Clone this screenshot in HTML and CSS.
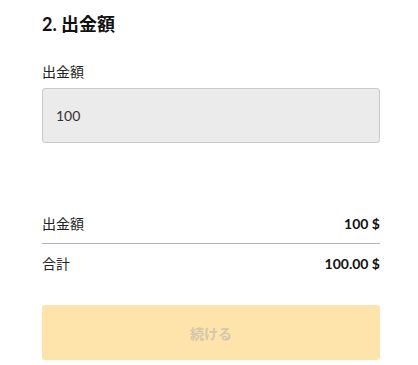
FILE: index.html
```html
<!DOCTYPE html>
<html lang="ja">
<head>
<meta charset="utf-8">
<link rel="stylesheet" href="styles.css">
</head>
<body>
<div class="page">
  <h2 class="title">2. 出金額</h2>
  <div class="field">
    <label class="label">出金額</label>
    <div class="input">100</div>
  </div>
  <div class="summary">
    <div class="row row-first"><span>出金額</span><span class="val">100 $</span></div>
    <div class="row"><span>合計</span><span class="val">100.00 $</span></div>
  </div>
  <button class="btn">続ける</button>
</div>
</body>
</html>
```
FILE: styles.css
```css
html, body { margin: 0; padding: 0; background: #fff; }
body {
  font-family: Lato, "Noto Sans CJK JP", sans-serif;
  color: #222;
}
.page {
  width: 338px;
  padding: 14px 0 0 42px;
  display: flex;
  flex-direction: column;
}
.title {
  margin: 0;
  font-size: 18px;
  line-height: 20px;
  font-weight: 700;
  color: #111;
}
.field {
  margin-top: 28px;
  display: flex;
  flex-direction: column;
}
.label {
  font-size: 14px;
  line-height: 20px;
  color: #222;
}
.input {
  margin-top: 6px;
  height: 53px;
  box-sizing: content-box;
  border: 1px solid #c9c9c9;
  border-radius: 3px;
  background: #ebebeb;
  padding: 0 13px;
  display: flex;
  align-items: center;
  font-size: 14px;
  color: #333;
}
.summary {
  margin-top: 70px;
  display: flex;
  flex-direction: column;
}
.row {
  display: flex;
  justify-content: space-between;
  align-items: center;
  font-size: 14px;
  height: 20px;
}
.row-first {
  padding-bottom: 10px;
  border-bottom: 1px solid #b5b5b5;
  margin-bottom: 9px;
}
.val { font-weight: 700; color: #111; }
.btn {
  margin-top: 32px;
  height: 55px;
  width: 338px;
  border: none;
  border-radius: 3px;
  background: #fee4ab;
  color: #d2c7ad;
  font-family: Lato, "Noto Sans CJK JP", sans-serif;
  font-size: 14px;
  font-weight: 700;
  padding: 0;
}
```
